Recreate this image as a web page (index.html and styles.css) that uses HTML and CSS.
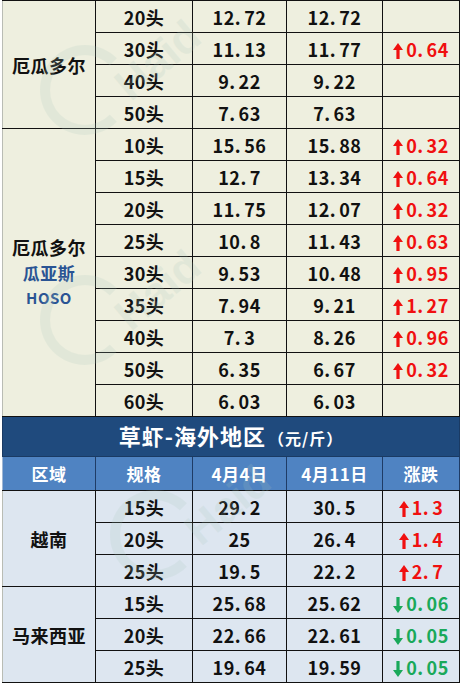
FILE: index.html
```html
<!DOCTYPE html>
<html lang="zh">
<head>
<meta charset="utf-8">
<link rel="stylesheet" href="styles.css">
</head>
<body>
<div class="wrap">
<table class="price">
  <colgroup>
    <col class="c1"><col class="c2"><col class="c3"><col class="c4"><col class="c5">
  </colgroup>
  <tbody class="beige">
    <tr class="first"><td rowspan="4" class="region">厄瓜多尔</td><td>20头</td><td class="num">12<i>.</i>72</td><td class="num">12<i>.</i>72</td><td></td></tr>
    <tr><td>30头</td><td class="num">11<i>.</i>13</td><td class="num">11<i>.</i>77</td><td class="up"><svg class="ar" viewBox="0 0 10 16"><path d="M5 0 L10 7 L6.6 7 L6.6 16 L3.4 16 L3.4 7 L0 7 Z"/></svg>0<i>.</i>64</td></tr>
    <tr><td>40头</td><td class="num">9<i>.</i>22</td><td class="num">9<i>.</i>22</td><td></td></tr>
    <tr><td>50头</td><td class="num">7<i>.</i>63</td><td class="num">7<i>.</i>63</td><td></td></tr>
    <tr><td rowspan="9" class="region"><div class="rl">厄瓜多尔</div><div class="rl sub">瓜亚斯</div><div class="rl sub hoso">HOSO</div></td><td>10头</td><td class="num">15<i>.</i>56</td><td class="num">15<i>.</i>88</td><td class="up"><svg class="ar" viewBox="0 0 10 16"><path d="M5 0 L10 7 L6.6 7 L6.6 16 L3.4 16 L3.4 7 L0 7 Z"/></svg>0<i>.</i>32</td></tr>
    <tr><td>15头</td><td class="num">12<i>.</i>7</td><td class="num">13<i>.</i>34</td><td class="up"><svg class="ar" viewBox="0 0 10 16"><path d="M5 0 L10 7 L6.6 7 L6.6 16 L3.4 16 L3.4 7 L0 7 Z"/></svg>0<i>.</i>64</td></tr>
    <tr><td>20头</td><td class="num">11<i>.</i>75</td><td class="num">12<i>.</i>07</td><td class="up"><svg class="ar" viewBox="0 0 10 16"><path d="M5 0 L10 7 L6.6 7 L6.6 16 L3.4 16 L3.4 7 L0 7 Z"/></svg>0<i>.</i>32</td></tr>
    <tr><td>25头</td><td class="num">10<i>.</i>8</td><td class="num">11<i>.</i>43</td><td class="up"><svg class="ar" viewBox="0 0 10 16"><path d="M5 0 L10 7 L6.6 7 L6.6 16 L3.4 16 L3.4 7 L0 7 Z"/></svg>0<i>.</i>63</td></tr>
    <tr><td>30头</td><td class="num">9<i>.</i>53</td><td class="num">10<i>.</i>48</td><td class="up"><svg class="ar" viewBox="0 0 10 16"><path d="M5 0 L10 7 L6.6 7 L6.6 16 L3.4 16 L3.4 7 L0 7 Z"/></svg>0<i>.</i>95</td></tr>
    <tr><td>35头</td><td class="num">7<i>.</i>94</td><td class="num">9<i>.</i>21</td><td class="up"><svg class="ar" viewBox="0 0 10 16"><path d="M5 0 L10 7 L6.6 7 L6.6 16 L3.4 16 L3.4 7 L0 7 Z"/></svg>1<i>.</i>27</td></tr>
    <tr><td>40头</td><td class="num">7<i>.</i>3</td><td class="num">8<i>.</i>26</td><td class="up"><svg class="ar" viewBox="0 0 10 16"><path d="M5 0 L10 7 L6.6 7 L6.6 16 L3.4 16 L3.4 7 L0 7 Z"/></svg>0<i>.</i>96</td></tr>
    <tr><td>50头</td><td class="num">6<i>.</i>35</td><td class="num">6<i>.</i>67</td><td class="up"><svg class="ar" viewBox="0 0 10 16"><path d="M5 0 L10 7 L6.6 7 L6.6 16 L3.4 16 L3.4 7 L0 7 Z"/></svg>0<i>.</i>32</td></tr>
    <tr><td>60头</td><td class="num">6<i>.</i>03</td><td class="num">6<i>.</i>03</td><td></td></tr>
  </tbody>
  <tbody>
    <tr class="title"><td colspan="5"><span class="t-main">草虾-海外地区</span><span class="t-unit">（元/斤）</span></td></tr>
    <tr class="head"><td>区域</td><td>规格</td><td>4月4日</td><td>4月11日</td><td>涨跌</td></tr>
  </tbody>
  <tbody class="blue">
    <tr><td rowspan="3" class="region">越南</td><td>15头</td><td class="num">29<i>.</i>2</td><td class="num">30<i>.</i>5</td><td class="up"><svg class="ar" viewBox="0 0 10 16"><path d="M5 0 L10 7 L6.6 7 L6.6 16 L3.4 16 L3.4 7 L0 7 Z"/></svg>1<i>.</i>3</td></tr>
    <tr><td>20头</td><td class="num">25</td><td class="num">26<i>.</i>4</td><td class="up"><svg class="ar" viewBox="0 0 10 16"><path d="M5 0 L10 7 L6.6 7 L6.6 16 L3.4 16 L3.4 7 L0 7 Z"/></svg>1<i>.</i>4</td></tr>
    <tr><td>25头</td><td class="num">19<i>.</i>5</td><td class="num">22<i>.</i>2</td><td class="up"><svg class="ar" viewBox="0 0 10 16"><path d="M5 0 L10 7 L6.6 7 L6.6 16 L3.4 16 L3.4 7 L0 7 Z"/></svg>2<i>.</i>7</td></tr>
    <tr><td rowspan="3" class="region">马来西亚</td><td>15头</td><td class="num">25<i>.</i>68</td><td class="num">25<i>.</i>62</td><td class="down"><svg class="ar" viewBox="0 0 10 16"><path d="M5 16 L10 9 L6.6 9 L6.6 0 L3.4 0 L3.4 9 L0 9 Z"/></svg>0<i>.</i>06</td></tr>
    <tr><td>20头</td><td class="num">22<i>.</i>66</td><td class="num">22<i>.</i>61</td><td class="down"><svg class="ar" viewBox="0 0 10 16"><path d="M5 16 L10 9 L6.6 9 L6.6 0 L3.4 0 L3.4 9 L0 9 Z"/></svg>0<i>.</i>05</td></tr>
    <tr><td>25头</td><td class="num">19<i>.</i>64</td><td class="num">19<i>.</i>59</td><td class="down"><svg class="ar" viewBox="0 0 10 16"><path d="M5 16 L10 9 L6.6 9 L6.6 0 L3.4 0 L3.4 9 L0 9 Z"/></svg>0<i>.</i>05</td></tr>
  </tbody>
</table>
<div class="wm wm1"><span class="ring"></span><span class="wtext">Haid</span></div>
<div class="wm wm2"><span class="ring"></span><span class="wtext">Haid</span></div>
<div class="wm wm3"><span class="ring"></span><span class="wtext">Haid</span></div>
</div>
</body>
</html>
```

FILE: styles.css
```css
html, body {
  margin: 0;
  padding: 0;
  background: #ffffff;
}
.wrap {
  position: relative;
  width: 462px;
  height: 687px;
  overflow: hidden;
  font-family: "Noto Sans CJK SC", "Noto Sans", sans-serif;
}
.price {
  margin-left: 2px;
  width: 457px;
  border-collapse: collapse;
  table-layout: fixed;
  font-weight: 700;
  color: #111;
}
.c1 { width: 93px; }
.c2 { width: 97px; }
.c3 { width: 94px; }
.c4 { width: 96px; }
.c5 { width: 77px; }
.price td {
  border: 1px solid #111;
  height: 31px;
  padding: 0;
  text-align: center;
  vertical-align: middle;
  font-size: 18px;
  line-height: 20px;
  letter-spacing: 0.5px;
}
.price tr td:first-child { border-left-color: #b9bcb4; }
.beige td { background: #eeefdf; }
.blue td { background: #dde6f0; }
.num { letter-spacing: 1px; }
.price i {
  font-style: normal;
  margin-right: 3px;
}
.region { font-size: 18px; letter-spacing: 1px; }
.rl { height: 25px; line-height: 25px; }
.sub { color: #2a5494; font-size: 17px; }
.hoso { font-size: 15px; letter-spacing: 0.5px; }
.up { color: #f01010; letter-spacing: 1px; }
.down { color: #1aa95a; letter-spacing: 1px; }
.ar {
  width: 10px;
  height: 16px;
  margin-right: 3px;
  vertical-align: -2px;
  fill: currentColor;
}
.title td {
  background: #1f4a7d;
  color: #ffffff;
  height: 39px;
  border-color: #1a3a63;
  border-left-color: #1a3a63;
}
.price .title td:first-child { border-left-color: #1a3a63; }
.t-main { font-size: 22px; letter-spacing: 1px; }
.t-unit { font-size: 16px; letter-spacing: 1px; margin-left: 2px; }
.head td {
  background: #4f83c2;
  color: #ffffff;
  height: 33px;
  font-size: 17px;
  border-color: #1f3c66;
  border-bottom-color: #111;
}
.price .head td:first-child { border-left-color: #9fb6d3; }
.wm {
  position: absolute;
  pointer-events: none;
  opacity: 0.5;
}
.ring {
  position: absolute;
  left: 0;
  top: 0;
  width: 70px;
  height: 70px;
  border-radius: 50%;
  border: 10px solid rgba(170, 200, 190, 0.35);
  border-right-color: transparent;
}
.wtext {
  position: absolute;
  left: 70px;
  top: -10px;
  transform: rotate(-40deg);
  font-family: "Liberation Sans", sans-serif;
  font-weight: 700;
  font-size: 44px;
  color: rgba(170, 200, 190, 0.35);
}
.wm1 { left: 40px; top: 45px; }
.wm2 { left: 40px; top: 275px; }
.wm3 { left: 110px; top: 490px; }
```
